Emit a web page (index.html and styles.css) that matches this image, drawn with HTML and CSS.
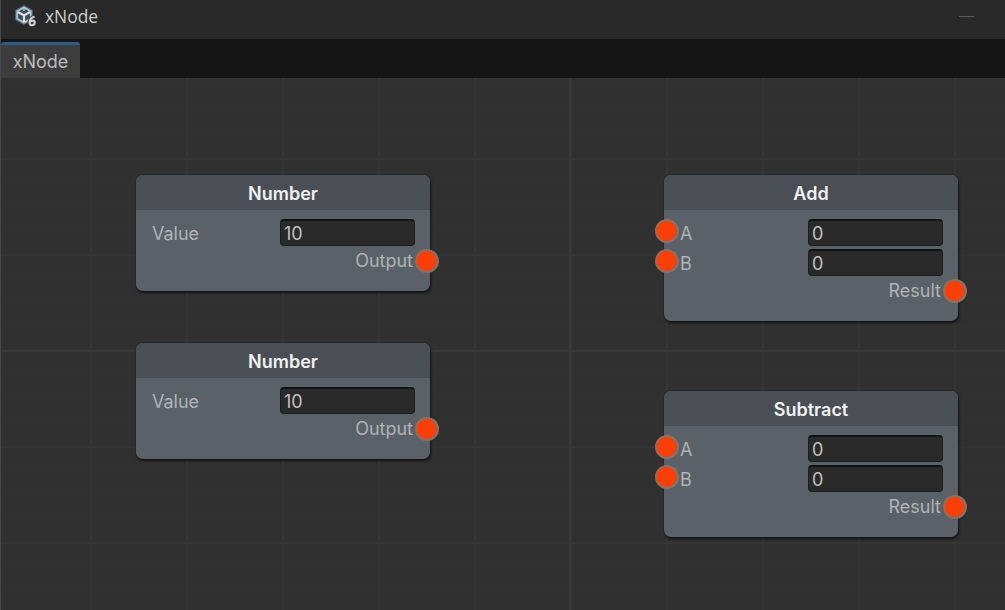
FILE: index.html
```html
<!DOCTYPE html>
<html lang="en">
<head>
  <meta charset="UTF-8" />
  <title>xNode</title>
  <link rel="stylesheet" href="styles.css">
</head>
<body>
<div class="window">
  <header class="titlebar">
    <svg class="logo" width="23" height="24" viewBox="0 0 23 24">
      <path d="M10 1 19 6V16L10 21 1 16V6Z" fill="#4d606f"/>
      <path d="M10 3.4 16.8 7.2V14.8L10 18.6 3.2 14.8V7.2Z" fill="#3f4d59" stroke="#b3c3ce" stroke-width="1.8"/>
      <path d="M10 18V11.4L4 8M10 11.4 16 8" fill="none" stroke="#dce5eb" stroke-width="2.2"/>
      <path d="M10 3.4V7" fill="none" stroke="#b3c3ce" stroke-width="1.6"/>
      <path d="M20.6 12.8C17.6 13.2 15.8 15.5 15.6 18.4C15.5 20.3 16.4 21.2 17.8 21.2C19.5 21.2 20.7 20 20.7 18.5C20.7 17.3 19.9 16.6 18.7 16.6C17.4 16.6 16.3 17.3 15.7 18.4" fill="none" stroke="#313538" stroke-width="3.8"/>
      <path d="M20.6 12.8C17.6 13.2 15.8 15.5 15.6 18.4C15.5 20.3 16.4 21.2 17.8 21.2C19.5 21.2 20.7 20 20.7 18.5C20.7 17.3 19.9 16.6 18.7 16.6C17.4 16.6 16.3 17.3 15.7 18.4" fill="none" stroke="#d0d0d0" stroke-width="2.1"/>
    </svg>
    <span class="title">xNode</span>
    <span class="minimize"></span>
  </header>

  <nav class="tabs">
    <div class="tab">xNode</div>
  </nav>

  <main class="canvas">
    <!-- Number nodes -->
    <section class="node number-1">
      <h2>Number</h2>
      <div class="node-body">
        <div class="row"><label>Value</label><span class="field">10</span></div>
        <div class="row output">Output<i class="port"></i></div>
      </div>
    </section>

    <section class="node number-2">
      <h2>Number</h2>
      <div class="node-body">
        <div class="row"><label>Value</label><span class="field">10</span></div>
        <div class="row output">Output<i class="port"></i></div>
      </div>
    </section>

    <!-- Math nodes -->
    <section class="node add">
      <h2>Add</h2>
      <div class="node-body">
        <div class="row input"><i class="port"></i><label>A</label><span class="field">0</span></div>
        <div class="row input"><i class="port"></i><label>B</label><span class="field">0</span></div>
        <div class="row output">Result<i class="port"></i></div>
      </div>
    </section>

    <section class="node subtract">
      <h2>Subtract</h2>
      <div class="node-body">
        <div class="row input"><i class="port"></i><label>A</label><span class="field">0</span></div>
        <div class="row input"><i class="port"></i><label>B</label><span class="field">0</span></div>
        <div class="row output">Result<i class="port"></i></div>
      </div>
    </section>
  </main>
</div>
</body>
</html>
```
FILE: styles.css
```css
* {
  box-sizing: border-box;
}
body {
  margin: 0;
  background: #303030;
  font-family: Inter, sans-serif;
  font-size: 18px;
  color: #b0b3b7;
}
.window {
  display: flex;
  flex-direction: column;
  height: 610px;
  overflow: hidden;
  border-left: 1px solid #484848;
}
.titlebar {
  display: flex;
  align-items: center;
  height: 39px;
  padding: 0 31px 7px 13px;
  background: #292929;
}
.title {
  margin-left: 8px;
  font-family: "Open Sans", "Noto Sans", sans-serif;
  font-size: 17.4px;
  color: #cdcdcd;
}
.minimize {
  width: 15px;
  height: 1px;
  margin-left: auto;
  background: #5c5c5c;
}
.tabs {
  display: flex;
  height: 39px;
  padding-top: 3px;
  background: #151515;
}
.tab {
  width: 79px;
  border-top: 3px solid #2c5d87;
  border-radius: 3px 3px 0 0;
  background: #3c3c3c;
  color: #bdbdbd;
  line-height: 33px;
  text-align: center;
}
/* Minor lines every 24px, major every 96px, origin axes slightly brighter */
.canvas {
  position: relative;
  flex: 1;
  background-color: #303030;
  background-image:
    linear-gradient(#393939, #393939),
    linear-gradient(#393939, #393939),
    linear-gradient(90deg, #353535 2px, transparent 2px),
    linear-gradient(#353535 2px, transparent 2px),
    linear-gradient(90deg, #313131 1px, transparent 1px),
    linear-gradient(#323232 1px, transparent 1px);
  background-size: 2px 100%, 100% 2px, 96px 96px, 96px 96px, 24px 24px, 24px 24px;
  background-position: 568px 0, 0 272px, 89px 0, 0 80px, 17px 0, 0 8px;
  background-repeat: no-repeat, no-repeat, repeat, repeat, repeat, repeat;
}
.node {
  position: absolute;
  width: 294px;
  border-radius: 7px;
  background: #5a6168;
  box-shadow: 1px 2px 3px rgba(0, 0, 0, 0.6), 0 0 2px rgba(0, 0, 0, 0.35);
}
.number-1 {
  left: 135px;
  top: 97px;
}
.number-2 {
  left: 135px;
  top: 265px;
}
.add {
  left: 663px;
  top: 97px;
}
.subtract {
  left: 663px;
  top: 313px;
}
.node h2 {
  height: 35px;
  margin: 0;
  border-radius: 7px 7px 0 0;
  background: #4a4f56;
  color: #f2f2f2;
  font-size: 18px;
  font-weight: 600;
  line-height: 38px;
  text-align: center;
}
.node-body {
  padding: 9px 15px 18px 16px;
}
.row {
  display: flex;
  align-items: center;
  height: 27px;
  margin-bottom: 3px;
}
.row label {
  padding-top: 1px;
}
.field {
  width: 135px;
  height: 27px;
  margin-left: auto;
  padding-left: 3px;
  border: 1px solid #1d1e20;
  border-top: 2px solid #0f1012;
  border-radius: 4px;
  background: #2a2a2a;
  color: #c0c0c0;
  line-height: 26px;
}
.port {
  flex: none;
  width: 24px;
  height: 24px;
  border: 2px solid #8c7063;
  border-radius: 50%;
  background: #fb3f08;
}
.input .port {
  margin: -3px 1px 0 -25px;
}
.output {
  justify-content: flex-end;
  height: 24px;
  margin: 0 -24px 0 0;
  line-height: 22px;
}
.output .port {
  margin-left: 2px;
}
```
